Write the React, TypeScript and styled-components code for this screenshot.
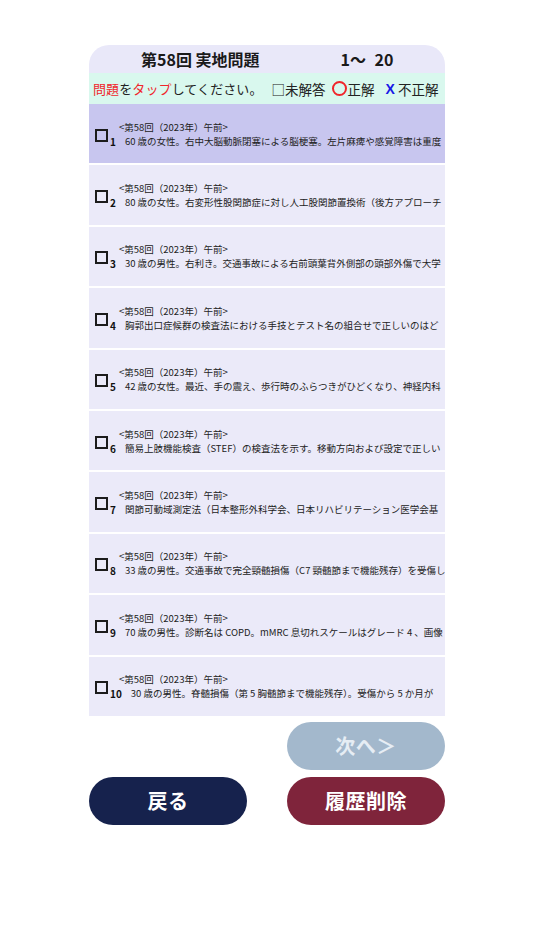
import React from "react";
import styled, { createGlobalStyle } from "styled-components";

const Global = createGlobalStyle`
  html, body { margin: 0; padding: 0; background: #ffffff; }
  body { font-family: "Noto Sans CJK JP", "Noto Sans", sans-serif; color: #222; }
`;

const Page = styled.div`
  width: 356px;
  margin: 0 auto;
  padding-top: 45px;
`;

const Card = styled.div`
  border-radius: 20px 20px 0 0;
  overflow: hidden;
  background: #ffffff;
`;

const Header = styled.div`
  height: 28px;
  background: #e9e8f9;
  display: flex;
  align-items: center;
  font-size: 16px;
  font-weight: 700;
  color: #1a1a1a;
`;

const Title = styled.span`
  margin-left: 52px;
`;

const Range = styled.span`
  margin-left: 81px;
  word-spacing: 5px;
`;

const Legend = styled.div`
  height: 31px;
  background: #d9f8ee;
  display: flex;
  align-items: center;
  padding-left: 4px;
  white-space: nowrap;
  color: #222;
`;

const Guide = styled.span`
  font-size: 13px;
  letter-spacing: 0.1px;
`;

const Red = styled.span`
  color: #f0262b;
`;

const Mark = styled.span<{ $gap?: number }>`
  font-size: 13.5px;
  display: inline-flex;
  align-items: center;
  margin-left: ${(p) => p.$gap ?? 0}px;
`;

const Circle = styled.span`
  display: inline-block;
  width: 11px;
  height: 11px;
  border: 2px solid #f0262b;
  border-radius: 50%;
  margin-right: 1px;
`;

const Cross = styled.span`
  color: #1717e6;
  font-weight: 700;
  font-family: "Liberation Sans", sans-serif;
  font-size: 14px;
  margin-right: 3px;
`;

const List = styled.div`
  display: flex;
  flex-direction: column;
  gap: 2px;
`;

const Row = styled.div<{ $active?: boolean }>`
  height: 59.4px;
  background: ${(p) => (p.$active ? "#c8c6ef" : "#ebeaf9")};
  display: flex;
  align-items: center;
  padding-left: 6px;
  overflow: hidden;
  white-space: nowrap;
`;

const Box = styled.span`
  flex: none;
  width: 9px;
  height: 9px;
  border: 2px solid #1c1c1c;
  margin-top: 3px;
`;

const Content = styled.div`
  margin-left: 2px;
  display: flex;
  flex-direction: column;
  min-width: 0;
`;

const Label = styled.div`
  font-size: 9.5px;
  line-height: 14px;
  padding-left: 9px;
  color: #222;
`;

const Line = styled.div`
  display: flex;
  align-items: baseline;
  line-height: 14px;
`;

const Num = styled.span`
  font-size: 10px;
  font-weight: 700;
  margin-right: 9px;
  color: #111;
  position: relative;
  top: 1px;
`;

const Text = styled.span`
  font-size: 9.5px;
  color: #222;
`;

const Buttons = styled.div`
  margin-top: 6px;
  display: grid;
  grid-template-columns: 158px 158px;
  column-gap: 40px;
  row-gap: 7px;
`;

const Btn = styled.button<{ $bg: string; $fg?: string; $col?: number }>`
  grid-column: ${(p) => p.$col ?? "auto"};
  height: 48px;
  border: none;
  border-radius: 24px;
  background: ${(p) => p.$bg};
  color: ${(p) => p.$fg ?? "#ffffff"};
  font-family: "Noto Sans CJK JP", sans-serif;
  font-size: 20px;
  font-weight: 700;
  letter-spacing: 0.5px;
  padding: 0;
  cursor: pointer;
`;

const questions = [
  "60 歳の女性。右中大脳動脈閉塞による脳梗塞。左片麻痺や感覚障害は重度",
  "80 歳の女性。右変形性股関節症に対し人工股関節置換術（後方アプローチ",
  "30 歳の男性。右利き。交通事故による右前頭葉背外側部の頭部外傷で大学",
  "胸郭出口症候群の検査法における手技とテスト名の組合せで正しいのはど",
  "42 歳の女性。最近、手の震え、歩行時のふらつきがひどくなり、神経内科",
  "簡易上肢機能検査（STEF）の検査法を示す。移動方向および設定で正しい",
  "関節可動域測定法（日本整形外科学会、日本リハビリテーション医学会基",
  "33 歳の男性。交通事故で完全頸髄損傷（C7 頸髄節まで機能残存）を受傷し",
  "70 歳の男性。診断名は COPD。mMRC 息切れスケールはグレード 4 、画像",
  "30 歳の男性。脊髄損傷（第 5 胸髄節まで機能残存）。受傷から 5 か月が",
];

export default function App() {
  return (
    <>
      <Global />
      <Page>
        <Card>
          <Header>
            <Title>第58回 実地問題</Title>
            <Range>1～ 20</Range>
          </Header>
          <Legend>
            <Guide>
              <Red>問題</Red>を<Red>タップ</Red>してください。
            </Guide>
            <Mark $gap={9}>□未解答</Mark>
            <Mark $gap={6}>
              <Circle />
              正解
            </Mark>
            <Mark $gap={11}>
              <Cross>X</Cross>不正解
            </Mark>
          </Legend>
          <List>
            {questions.map((q, i) => (
              <Row key={i} $active={i === 0}>
                <Box />
                <Content>
                  <Label>&lt;第58回（2023年）午前&gt;</Label>
                  <Line>
                    <Num>{i + 1}</Num>
                    <Text>{q}</Text>
                  </Line>
                </Content>
              </Row>
            ))}
          </List>
        </Card>
        <Buttons>
          <Btn $bg="#a3b8cc" $fg="#e6edf4" $col={2}>
            次へ＞
          </Btn>
          <Btn $bg="#16224d">戻る</Btn>
          <Btn $bg="#7f243b">履歴削除</Btn>
        </Buttons>
      </Page>
    </>
  );
}
